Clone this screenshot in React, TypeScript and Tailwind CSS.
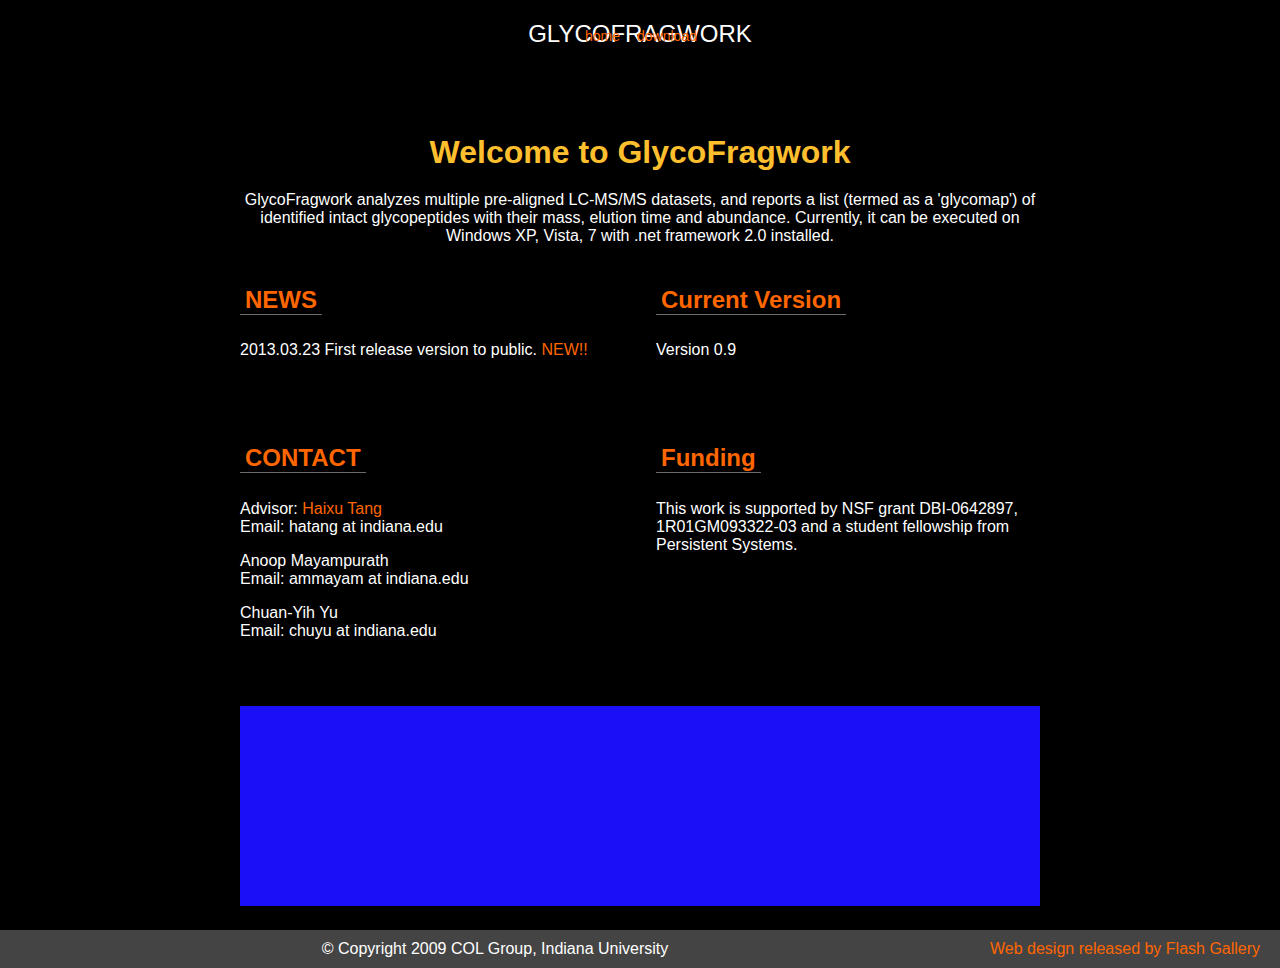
import React from 'react';

const font = { fontFamily: '"Liberation Sans", Arial, sans-serif' };

function SectionTitle({ children }: { children: React.ReactNode }) {
  return (
    <h2 className="inline-block border-b border-[#6b6b6b] px-[5px] text-[24px] leading-[28px] font-bold text-[#ff6600]">
      {children}
    </h2>
  );
}

export default function App() {
  return (
    <div className="min-h-screen bg-black text-white text-[16px] leading-[18px]" style={font}>
      {/* Header */}
      <header className="relative pt-[20px] h-[72px]">
        <div className="text-center text-[24px] leading-[28px]">GLYCOFRAGWORK</div>
        <nav className="absolute left-[585px] top-[28px] flex gap-[17px] text-[14px] leading-[16px] text-[#ff6600]">
          <a href="#">home</a>
          <a href="#">download</a>
        </nav>
      </header>

      <main className="w-[800px] mx-auto">
        <h1 className="mt-[61px] text-center text-[32px] leading-[38px] font-bold text-[#fdbf2d]">
          Welcome to GlycoFragwork
        </h1>
        <p className="mt-[20px] text-center">
          GlycoFragwork analyzes multiple pre-aligned LC-MS/MS datasets, and reports a list (termed as a 'glycomap') of
          identified intact glycopeptides with their mass, elution time and abundance. Currently, it can be executed on
          Windows XP, Vista, 7 with .net framework 2.0 installed.
        </p>

        {/* Row 1 */}
        <div className="mt-[41px] grid grid-cols-[384px_384px] gap-x-[32px] h-[158px]">
          <div>
            <SectionTitle>NEWS</SectionTitle>
            <p className="mt-[26px]">
              2013.03.23 First release version to public. <span className="text-[#ff6600]">NEW!!</span>
            </p>
          </div>
          <div>
            <SectionTitle>Current Version</SectionTitle>
            <p className="mt-[26px]">Version 0.9</p>
          </div>
        </div>

        {/* Row 2 */}
        <div className="grid grid-cols-[384px_384px] gap-x-[32px]">
          <div>
            <SectionTitle>CONTACT</SectionTitle>
            <div className="mt-[27px] flex flex-col gap-[16px]">
              <p>
                Advisor: <span className="text-[#ff6600]">Haixu Tang</span>
                <br />
                Email: hatang at indiana.edu
              </p>
              <p>
                Anoop Mayampurath
                <br />
                Email: ammayam at indiana.edu
              </p>
              <p>
                Chuan-Yih Yu
                <br />
                Email: chuyu at indiana.edu
              </p>
            </div>
          </div>
          <div>
            <SectionTitle>Funding</SectionTitle>
            <p className="mt-[27px]">
              This work is supported by NSF grant DBI-0642897, 1R01GM093322-03 and a student fellowship from
              Persistent Systems.
            </p>
          </div>
        </div>

        <div className="mt-[66px] h-[200px] bg-[#1a10f7]" />
      </main>

      <footer className="mt-[24px] h-[38px] bg-[#444444] flex items-center">
        <div className="w-[990px] shrink-0 text-center whitespace-nowrap">
          © Copyright 2009 COL Group, Indiana University
        </div>
        <div className="flex-1 text-right pr-[20px] whitespace-nowrap text-[#ff6600]">
          Web design released by Flash Gallery
        </div>
      </footer>
    </div>
  );
}
